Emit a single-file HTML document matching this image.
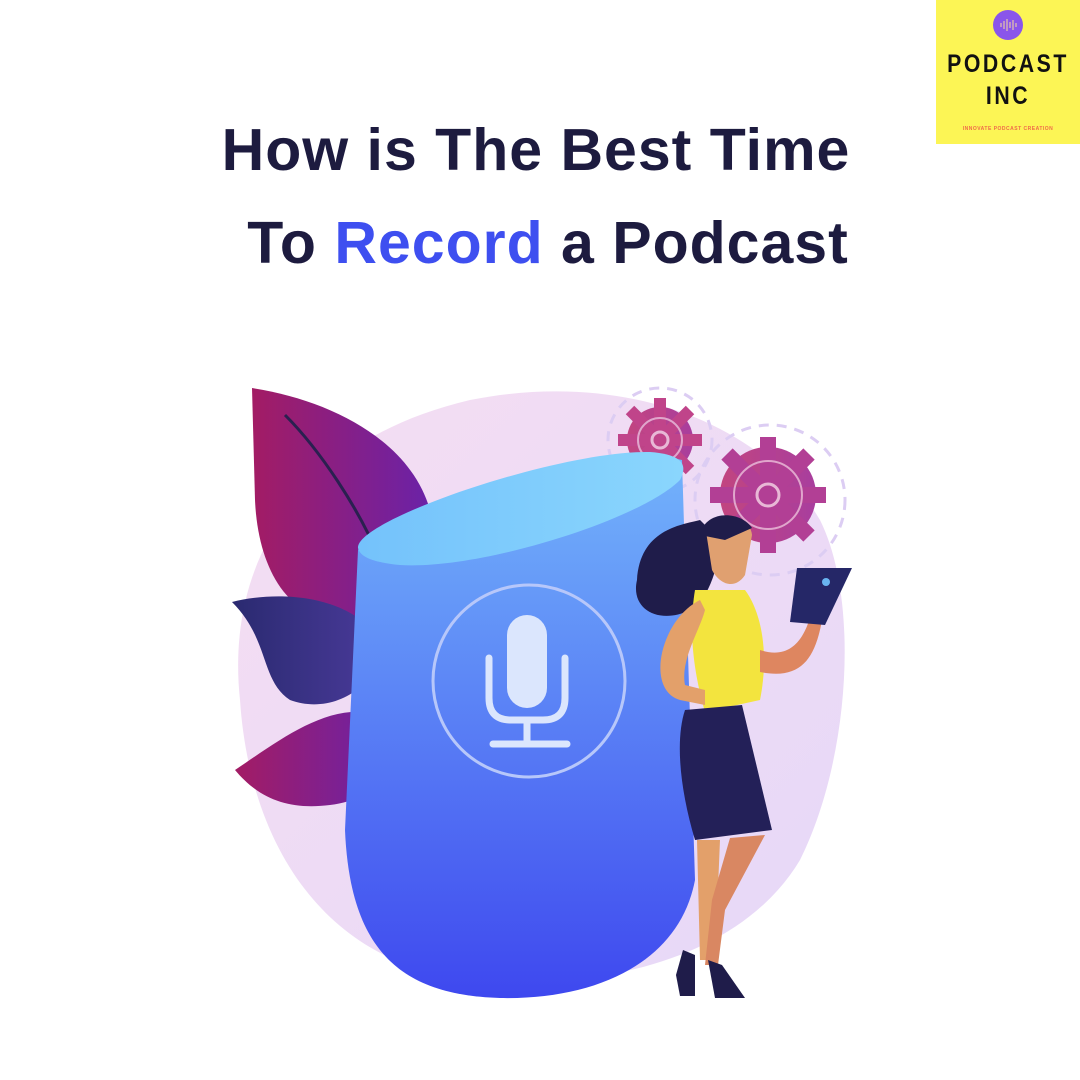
<!DOCTYPE html>
<html><head><meta charset="utf-8"><style>
html,body{margin:0;padding:0;background:#fff;width:1080px;height:1080px;overflow:hidden;position:relative}
.t{position:absolute;left:0;width:1080px;text-align:center;font-family:"Liberation Sans",sans-serif;font-weight:700;font-size:59px;color:#1d1b3f;letter-spacing:1px;line-height:1}
.logo{position:absolute;left:936px;top:0;width:144px;height:144px;background:#fcf555;font-family:"Liberation Sans",sans-serif;text-align:center}
</style></head><body>
<div class="t" style="top:121px;left:-4px">How is The Best Time</div>
<div class="t" style="top:214px;left:8px">To <span style="color:#3e4ff0">Record</span> a Podcast</div>
<div class="logo">
<div style="position:absolute;left:57px;top:10px;width:30px;height:30px;border-radius:50%;background:#8a55ea"></div>
<svg style="position:absolute;left:62px;top:14px" width="20" height="22"><g stroke="#e6c9a8" stroke-width="1.2"><path d="M3 9v4M6 7v8M9 5v12M12 8v6M15 6v10M18 9v4"/></g></svg>
<div style="position:absolute;top:50px;width:144px;font-size:25px;font-weight:700;letter-spacing:3px;color:#111;transform:scaleX(.85)">PODCAST</div>
<div style="position:absolute;top:82px;width:144px;font-size:25px;font-weight:700;letter-spacing:3px;color:#111;transform:scaleX(.85)">INC</div>
<div style="position:absolute;top:126px;width:144px;font-size:5px;font-weight:700;color:#f06a4a;letter-spacing:.5px">INNOVATE PODCAST CREATION</div>
</div>
<svg style="position:absolute;left:0;top:0" width="1080" height="1080">
<defs>
<linearGradient id="cyl" x1="0" y1="0" x2="0" y2="1"><stop offset="0" stop-color="#73b4fb"/><stop offset="1" stop-color="#3e48ef"/></linearGradient>
<linearGradient id="top" x1="0" y1="0" x2="1" y2="0"><stop offset="0" stop-color="#74c2fb"/><stop offset="1" stop-color="#8ad6fd"/></linearGradient>
<linearGradient id="leaf" x1="0" y1="0" x2="1" y2="0"><stop offset="0" stop-color="#a31c64"/><stop offset="1" stop-color="#6a22a8"/></linearGradient>
<linearGradient id="leaf2" x1="0" y1="0" x2="1" y2="0"><stop offset="0" stop-color="#2a2a70"/><stop offset="1" stop-color="#4a3a9a"/></linearGradient>
<linearGradient id="bg" x1="0" y1="0" x2="1" y2="1"><stop offset="0" stop-color="#f5def2"/><stop offset="1" stop-color="#e6d8f8"/></linearGradient>
<linearGradient id="gear" x1="0" y1="0" x2="1" y2="0"><stop offset="0" stop-color="#c2457f"/><stop offset="1" stop-color="#a83e9e"/></linearGradient>
</defs>
<path d="M240 700 C225 560 300 440 470 400 C620 370 760 420 820 520 C860 600 850 760 800 860 C740 960 600 990 480 980 C330 970 250 850 240 700Z" fill="url(#bg)"/>
<circle cx="660" cy="440" r="52" fill="none" stroke="#dccdf3" stroke-width="3" stroke-dasharray="10 8"/>
<circle cx="770" cy="500" r="75" fill="none" stroke="#dccdf3" stroke-width="3" stroke-dasharray="10 8"/>
<g fill="url(#gear)"><circle cx="660" cy="440" r="33"/><g stroke="#c0448a" stroke-width="12"><path d="M660 398v84M618 440h84M630 410l60 60M690 410l-60 60"/></g></g>
<g fill="url(#gear)"><circle cx="768" cy="495" r="48"/><g stroke="#b23f95" stroke-width="16"><path d="M768 437v116M710 495h116M727 454l82 82M809 454l-82 82"/></g></g>
<circle cx="768" cy="495" r="34" fill="none" stroke="#e0a6cc" stroke-width="2"/><circle cx="768" cy="495" r="11" fill="none" stroke="#e8b8d6" stroke-width="3"/>
<circle cx="660" cy="440" r="22" fill="none" stroke="#e0a6cc" stroke-width="2"/><circle cx="660" cy="440" r="8" fill="none" stroke="#e8b8d6" stroke-width="3"/>
<path d="M252 388 C330 400 410 440 430 510 C440 560 410 610 360 620 C290 630 258 570 255 500Z" fill="url(#leaf)"/>
<path d="M285 415 C320 450 360 510 380 560" stroke="#2a2050" stroke-width="3" fill="none"/>
<path d="M232 602 C280 590 350 595 380 640 C380 690 330 715 290 700 C260 680 270 640 232 602Z" fill="url(#leaf2)"/>
<path d="M235 770 C280 740 330 700 380 715 C400 760 380 800 330 805 C290 810 260 800 235 770Z" fill="url(#leaf)"/>
<path d="M358 550 C360 540 600 440 682 460 L695 880 C680 960 600 1000 500 998 C400 995 350 950 345 830Z" fill="url(#cyl)"/>
<path d="M358 548 C355 520 560 450 650 452 C690 455 685 470 680 480 C640 520 480 570 400 565 C370 562 360 556 358 548Z" fill="url(#top)"/>
<circle cx="529" cy="681" r="96" fill="none" stroke="#b7c7fa" stroke-width="3"/>
<rect x="507" y="615" width="40" height="93" rx="20" fill="#dbe6fd"/>
<path d="M489 658v40q0 22 22 22h32q22 0 22-22v-40" fill="none" stroke="#dbe6fd" stroke-width="7" stroke-linecap="round"/>
<path d="M527 722v20M493 744h74" stroke="#dbe6fd" stroke-width="7" stroke-linecap="round"/>
<path d="M700 520 C680 525 640 530 637 580 C630 610 660 625 690 610 C710 600 720 560 720 540Z" fill="#1f1c4a"/>
<path d="M705 525 C720 510 750 515 752 535 L745 575 C735 590 720 585 712 570Z" fill="#e0a070"/>
<path d="M700 535 C705 510 740 510 752 528 L725 540Z" fill="#1f1c4a"/>
<path d="M695 590 L745 590 C760 610 770 650 760 700 L705 712 C690 660 690 620 695 590Z" fill="#f3e43e"/>
<path d="M700 600 C660 620 645 690 680 700 L705 705 L705 690 L685 685 C680 660 700 630 705 610Z" fill="#e3a06a"/>
<path d="M760 650 C790 660 805 640 812 610 L822 620 C815 660 800 680 760 672Z" fill="#de8660"/>
<path d="M797 568 L852 568 L825 625 L790 622Z" fill="#252767"/><circle cx="826" cy="582" r="4" fill="#69b4f0"/>
<path d="M685 710 L742 705 L772 830 L695 840 C680 790 675 740 685 710Z" fill="#232058"/>
<path d="M697 840 L720 840 L715 960 L700 960Z" fill="#e3a06a"/>
<path d="M730 838 L765 835 L725 910 L718 965 L705 965 L712 900Z" fill="#d98762"/>
<path d="M683 950 L695 955 L695 996 L680 996 L676 975Z" fill="#1f1c4a"/>
<path d="M708 960 L722 965 L745 998 L715 998Z" fill="#1f1c4a"/>
</svg>
</body></html>
